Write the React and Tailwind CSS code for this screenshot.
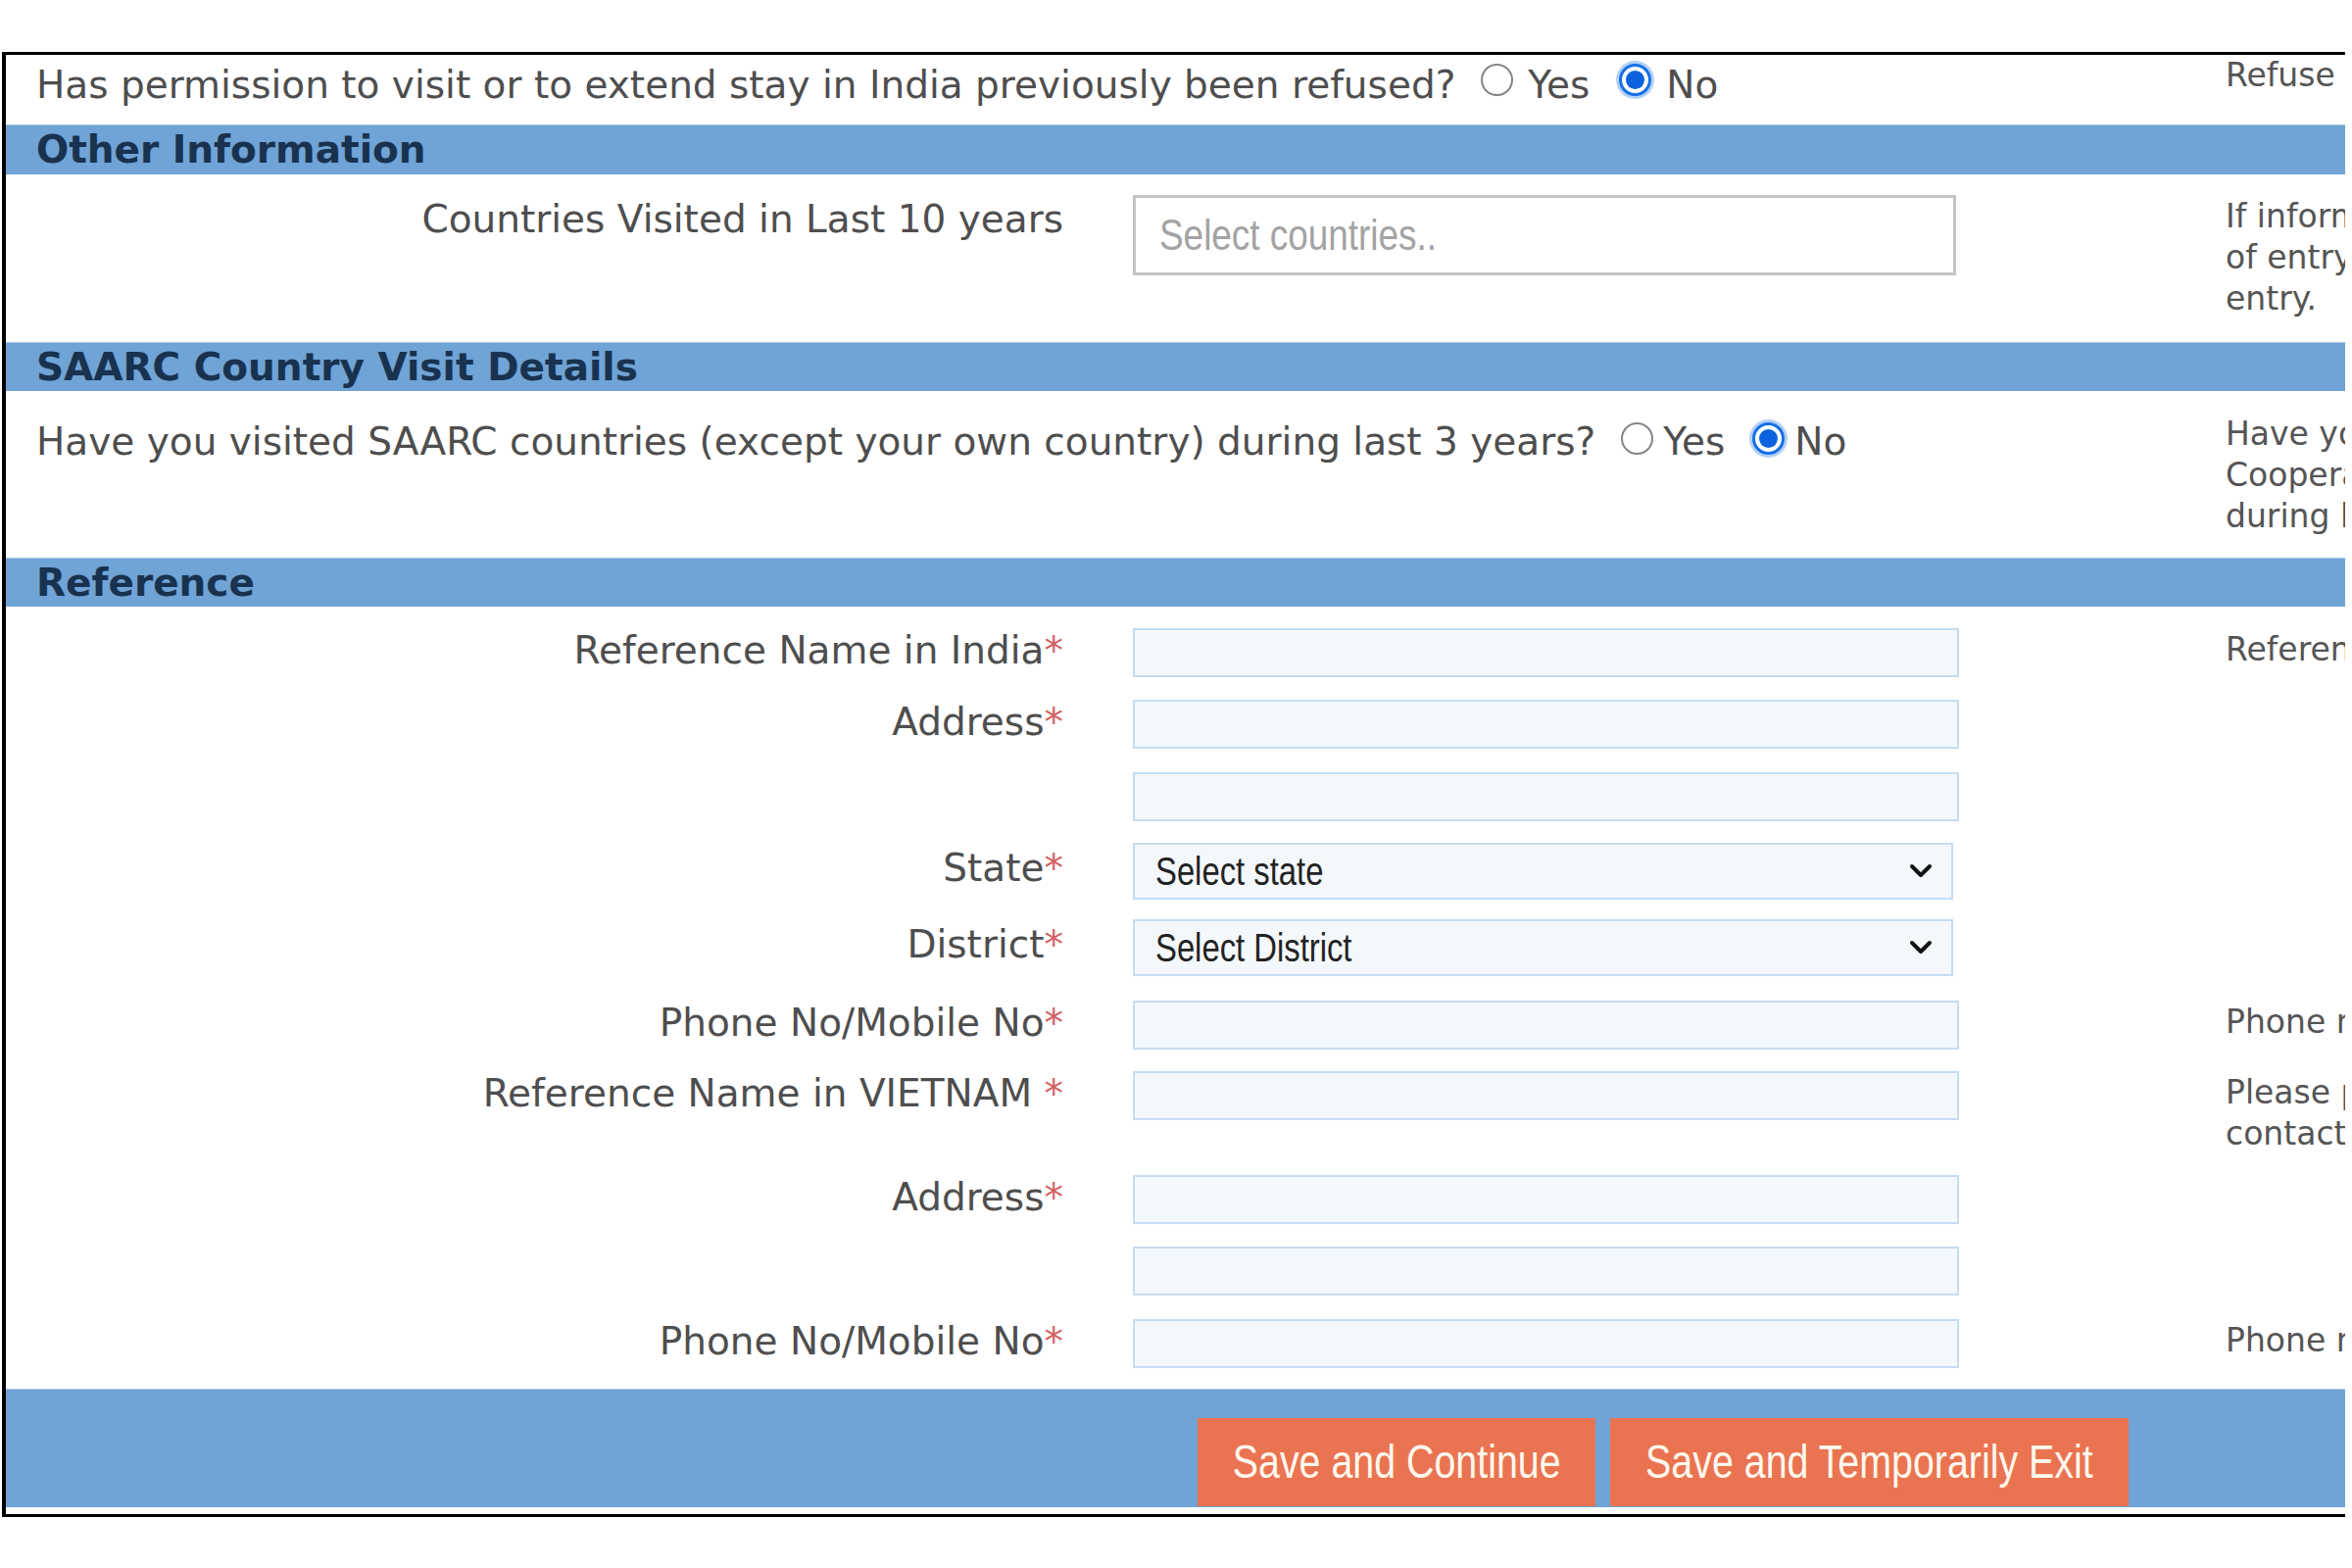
import React from 'react';

const arial = "font-['Liberation_Sans',Arial,sans-serif]";

// the reference renders Arial text condensed; squeeze it horizontally
const Narrow = ({ children, cls }) => (
  <span className={`inline-block whitespace-nowrap scale-x-[0.82] ${cls}`}>{children}</span>
);

const Radio = ({ checked, lift }) =>
  checked ? (
    <span className={`w-[33px] h-[33px] shrink-0 rounded-full border-[3px] border-[#1570e6] bg-white flex items-center justify-center ring-[3px] ring-[#b4d0f4] ${lift}`}>
      <span className="w-[19px] h-[19px] rounded-full bg-[#0a62de]"></span>
    </span>
  ) : (
    <span className={`w-[33px] h-[33px] shrink-0 rounded-full border-2 border-[#858585] bg-white ${lift}`}></span>
  );

const Chevron = () => (
  <svg width="24" height="16" viewBox="0 0 24 16" className="absolute right-[19px] top-1/2 -translate-y-1/2 pointer-events-none">
    <polyline points="3,3 12,12 21,3" fill="none" stroke="#111" strokeWidth="4" strokeLinecap="round" strokeLinejoin="round" />
  </svg>
);

const Bar = ({ title, h }) => (
  <div className={`${h} bg-[#70a3d6] border-t border-[#a9c8e8] pl-[31px] flex items-center font-bold text-[39px] text-[#18324f]`}>
    {title}
  </div>
);

const Help = ({ lines, pad }) => (
  <div className={`w-[500px] shrink-0 ${pad} text-[33px] leading-[42px] text-[#555] whitespace-nowrap`}>
    {lines.map((l) => (
      <div key={l}>{l}</div>
    ))}
  </div>
);

const Req = () => <span className="text-[#d26363]">*</span>;

const rows = [
  { label: 'Reference Name in India', kind: 'input', h: 'h-[73px]', help: ['Reference name in India'] },
  { label: 'Address', kind: 'input', h: 'h-[74px]' },
  { label: '', kind: 'input', h: 'h-[72px]' },
  { label: 'State', kind: 'select', text: 'Select state', h: 'h-[78px]' },
  { label: 'District', kind: 'select', text: 'Select District', h: 'h-[83px]' },
  { label: 'Phone No/Mobile No', kind: 'input', h: 'h-[72px]', help: ['Phone number of reference'] },
  { label: 'Reference Name in VIETNAM ', kind: 'input', h: 'h-[106px]', help: ['Please provide reference', 'contact details in your country'] },
  { label: 'Address', kind: 'input', h: 'h-[73px]' },
  { label: '', kind: 'input', h: 'h-[74px]' },
  { label: 'Phone No/Mobile No', kind: 'input', h: 'h-[71px]', help: ['Phone number of reference'] },
];

const RefRow = ({ row }) => (
  <div className={`flex items-start ${row.h}`}>
    <div className={`w-[1079px] shrink-0 text-right ${row.kind === 'select' ? 'pt-[3px]' : ''}`}>
      {row.label && (
        <>
          {row.label}
          <Req />
        </>
      )}
    </div>
    <div className="w-[1186px] shrink-0 pl-[71px]">
      {row.kind === 'input' ? (
        <input className="block w-[843px] h-[50px] bg-[#f3f8fd] border-2 border-[#c6dcf1] outline-none" />
      ) : (
        <div className={`relative w-[837px] h-[58px] bg-[#f4f8fd] border-2 border-[#c6dcf1] flex items-center ${arial}`}>
          <Narrow cls="origin-left ml-[21px] text-[40px] text-[#222]">{row.text}</Narrow>
          <Chevron />
        </div>
      )}
    </div>
    {row.help && <Help lines={row.help} pad="pt-[1px]" />}
  </div>
);

export default function App() {
  return (
    <div className="w-[2400px] h-[1600px] bg-white overflow-hidden font-['DejaVu_Sans',sans-serif] text-[39px] leading-[46px] text-[#4e4e4e]">
      <div className="pt-[53px]">
        <div className="ml-[2px] w-[2391px] border-t-[3px] border-l-4 border-b-[3px] border-black overflow-hidden">
          {/* refused question */}
          <div className="flex items-start h-[71px]">
            <div className="w-[2265px] shrink-0 pl-[31px] pt-[8px] flex items-center">
              <span>Has permission to visit or to extend stay in India previously been refused?</span>
              <Radio lift="ml-[26px] mb-[12px]" />
              <span className="ml-[15px]">Yes</span>
              <Radio checked lift="ml-[30px] mb-[12px]" />
              <span className="ml-[15px]">No</span>
            </div>
            <Help lines={['Refuse details if any']} pad="pt-0" />
          </div>

          <Bar title="Other Information" h="h-[51px]" />

          <div className="flex items-start h-[171px]">
            <div className="w-[1079px] shrink-0 text-right pt-[23px]">Countries Visited in Last 10 years</div>
            <div className="w-[1186px] shrink-0 pl-[71px] pt-[21px]">
              <div className={`w-[840px] h-[82px] bg-white border-[3px] border-[#c4c4c4] flex items-center ${arial}`}>
                <Narrow cls="origin-left ml-[24px] text-[45px] text-[#a3a3a3]">Select countries..</Narrow>
              </div>
            </div>
            <Help lines={['If information is not available, mention date', 'of entry and port of', 'entry.']} pad="pt-[22px]" />
          </div>

          <Bar title="SAARC Country Visit Details" h="h-[50px]" />

          <div className="flex items-start h-[170px]">
            <div className="w-[2265px] shrink-0 pl-[31px] pt-[29px] flex items-center">
              <span>Have you visited SAARC countries (except your own country) during last 3 years?</span>
              <Radio lift="ml-[26px] mb-[8px]" />
              <span className="ml-[10px]">Yes</span>
              <Radio checked lift="ml-[28px] mb-[8px]" />
              <span className="ml-[10px]">No</span>
            </div>
            <Help lines={['Have you visited South Asian Association for Regional', 'Cooperation (SAARC) countries', 'during last 3 years']} pad="pt-[23px]" />
          </div>

          <Bar title="Reference" h="h-[50px]" />

          <div className="pt-[22px]">
            {rows.map((r, i) => (
              <RefRow key={i} row={r} />
            ))}
          </div>

          <div className={`h-[121px] bg-[#70a3d6] border-t border-[#a9c8e8] flex items-start pt-[29px] pl-[1216px] gap-[15px] ${arial}`}>
            <button className="w-[406px] h-[90px] bg-[#ea7451] flex items-center justify-center">
              <Narrow cls="text-[48px] text-[#fff8ee]">Save and Continue</Narrow>
            </button>
            <button className="w-[529px] h-[90px] bg-[#ea7451] flex items-center justify-center">
              <Narrow cls="text-[48px] text-[#fff8ee]">Save and Temporarily Exit</Narrow>
            </button>
          </div>
          <div className="h-[7px] bg-white"></div>
        </div>
      </div>
    </div>
  );
}
